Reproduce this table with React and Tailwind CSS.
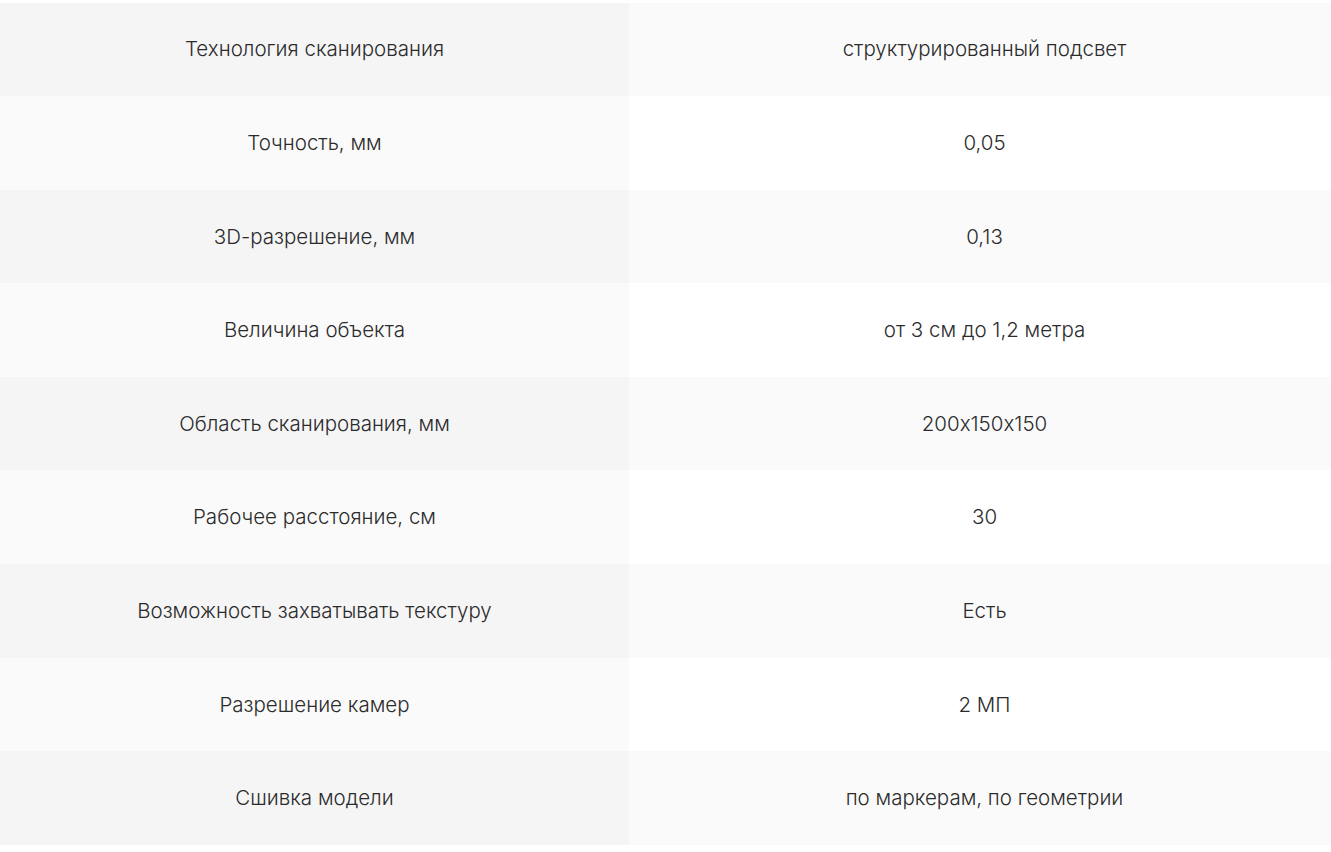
const rows = [
  ["Технология сканирования", "структурированный подсвет"],
  ["Точность, мм", "0,05"],
  ["3D-разрешение, мм", "0,13"],
  ["Величина объекта", "от 3 см до 1,2 метра"],
  ["Область сканирования, мм", "200x150x150"],
  ["Рабочее расстояние, см", "30"],
  ["Возможность захватывать текстуру", "Есть"],
  ["Разрешение камер", "2 МП"],
  ["Сшивка модели", "по маркерам, по геометрии"],
];

export default function App() {
  return (
    <div className="w-full h-[852px] bg-white overflow-hidden pt-[2.5px] font-['Inter',sans-serif] font-light text-[20.5px] text-[#2b2b2b] [font-feature-settings:'calt'_0]">
      {rows.map(([k, v], i) => (
        <div key={i} className="flex h-[93.6px]">
          <div className={`w-[629px] flex items-center justify-center pt-[1px] ${i % 2 === 0 ? "bg-[#f5f5f6]" : "bg-[#fafafa]"}`}>
            {k}
          </div>
          <div className={`flex-1 flex items-center justify-center pl-[9px] pt-[1px] ${i % 2 === 0 ? "bg-[#fafafb]" : "bg-white"}`}>
            {v}
          </div>
        </div>
      ))}
    </div>
  );
}
